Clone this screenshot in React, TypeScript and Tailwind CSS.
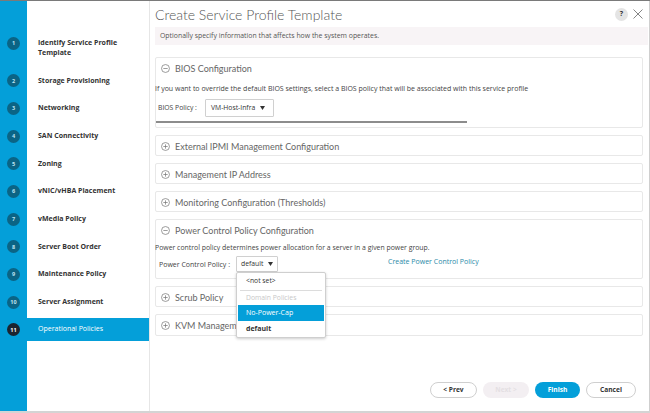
import React from "react";

const steps = [
  "Identify Service Profile Template",
  "Storage Provisioning",
  "Networking",
  "SAN Connectivity",
  "Zoning",
  "vNIC/vHBA Placement",
  "vMedia Policy",
  "Server Boot Order",
  "Maintenance Policy",
  "Server Assignment",
  "Operational Policies",
];

function PlusIcon({ minus = false }: { minus?: boolean }) {
  return (
    <svg width="9" height="9" viewBox="0 0 10 10" className="shrink-0">
      <circle cx="5" cy="5" r="4.4" fill="none" stroke="#777" strokeWidth="0.8" />
      <line x1="2.6" y1="5" x2="7.4" y2="5" stroke="#777" strokeWidth="0.8" />
      {!minus && <line x1="5" y1="2.6" x2="5" y2="7.4" stroke="#777" strokeWidth="0.8" />}
    </svg>
  );
}

function SectionHeader({ title, minus = false }: { title: string; minus?: boolean }) {
  return (
    <div className="h-[21px] flex items-center gap-[5px] pl-[5px]">
      <PlusIcon minus={minus} />
      <span className="text-[9px] text-[#666] font-['Lato',sans-serif]">{title}</span>
    </div>
  );
}

function Caret() {
  return (
    <svg width="5" height="4" viewBox="0 0 5 4" className="ml-[5px]">
      <polygon points="0,0 5,0 2.5,4" fill="#333" />
    </svg>
  );
}

export default function App() {
  return (
    <div
      className="w-[650px] h-[413px] flex bg-white border-t border-t-[#7a7a7a] border-b-2 border-b-[#d4d4d4] overflow-hidden"
      style={{ fontFamily: "'Open Sans', Lato, sans-serif" }}
    >
      {/* Sidebar */}
      <div className="w-[150px] shrink-0 h-full bg-[linear-gradient(to_right,#049fd9_27px,#ffffff_27px)] border-r border-r-[#e6e6e6] pt-[27px]">
        {steps.map((s, i) => {
          const active = i === steps.length - 1;
          const first = i === 0;
          return (
            <div
              key={s}
              className={`flex ${first ? "h-[39px] items-start" : "h-[27.67px] items-center"}`}
            >
              <div className={`w-[27px] flex justify-center ${first ? "pt-[9px]" : ""}`}>
                <div
                  className={`w-[13px] h-[13px] rounded-full flex items-center justify-center text-[5.5px] font-bold ${
                    active ? "bg-[#1c2430] text-white" : "bg-[#0b6485] text-[#bfe3f2]"
                  }`}
                >
                  {i + 1}
                </div>
              </div>
              <div
                className={`flex-1 flex items-center pl-[11px] ${
                  active ? "h-[23px] bg-[#049fd9] text-white font-normal" : "text-[#333] font-bold"
                } ${first ? "pt-[10px] pr-[25px] leading-[10px]" : ""} text-[7px]`}
              >
                {s}
              </div>
            </div>
          );
        })}
      </div>

      {/* Main */}
      <div className="flex-1 h-full flex flex-col pl-[5px] pr-[6px] border-r border-r-[#cfcfcf] relative">
        <div className="h-[26px] flex items-center">
          <span className="text-[14px] text-[#555] font-light font-['Lato',sans-serif]">Create Service Profile Template</span>
          <div className="ml-auto flex items-center gap-[5px]">
            <div className="w-[13px] h-[13px] rounded-full bg-[#e4e4e4] flex items-center justify-center text-[7px] font-bold text-[#333]">
              ?
            </div>
            <svg width="10" height="10" viewBox="0 0 10 10">
              <line x1="0.5" y1="0.5" x2="9.5" y2="9.5" stroke="#777" strokeWidth="0.9" />
              <line x1="9.5" y1="0.5" x2="0.5" y2="9.5" stroke="#777" strokeWidth="0.9" />
            </svg>
          </div>
        </div>
        <div className="h-[18px] bg-[#f8f4f6] flex items-center pl-[5px] text-[6.9px] text-[#555] -mr-[5px]">
          Optionally specify information that affects how the system operates.
        </div>

        <div className="mt-[12px] flex flex-col gap-[7px]">
          {/* BIOS */}
          <div className="h-[71px] border border-[#e8e8e8] rounded-[2px]">
            <SectionHeader title="BIOS Configuration" minus />
            <div className="text-[7px] text-[#444] mt-[6px] -ml-[1px] leading-[8px]">
              If you want to override the default BIOS settings, select a BIOS policy that will be associated with this service profile
            </div>
            <div className="flex items-center mt-[6px] pl-[2px]">
              <span className="text-[6.8px] text-[#444] w-[47px]">BIOS Policy :</span>
              <div className="w-[69px] h-[18px] border border-[#d0d0d0] rounded-[1px] flex items-center pl-[5px] text-[6.8px] text-[#333]">
                VM-Host-Infra
                <Caret />
              </div>
            </div>
            <div className="mt-[4px] h-[2px] w-[311px] bg-[#8c8c8c] ml-[0px]" />
          </div>

          <div className="h-[21px] border border-[#e8e8e8] rounded-[2px]">
            <SectionHeader title="External IPMI Management Configuration" />
          </div>
          <div className="h-[21px] border border-[#e8e8e8] rounded-[2px]">
            <SectionHeader title="Management IP Address" />
          </div>
          <div className="h-[21px] border border-[#e8e8e8] rounded-[2px]">
            <SectionHeader title="Monitoring Configuration (Thresholds)" />
          </div>

          {/* Power */}
          <div className="h-[60px] border border-[#e8e8e8] rounded-[2px] relative">
            <SectionHeader title="Power Control Policy Configuration" minus />
            <div className="text-[6.9px] text-[#444] mt-[3px] -ml-[1px] leading-[8px]">
              Power control policy determines power allocation for a server in a given power group.
            </div>
            <div className="flex items-start mt-[4px] pl-[3px]">
              <span className="text-[7px] text-[#444] w-[77px] mt-[4px]">Power Control Policy :</span>
              <div className="w-[42px] h-[16px] border border-[#d0d0d0] rounded-[1px] flex items-center pl-[4px] text-[6.8px] text-[#333]">
                default
                <Caret />
              </div>
              <span className="ml-[110px] text-[7px] text-[#2a8aa8] mt-[1px]">Create Power Control Policy</span>
            </div>

            {/* Dropdown */}
            <div className="absolute left-[80px] top-[52px] w-[90px] h-[66px] bg-white border border-[#cfcfcf] rounded-[2px] shadow-[0_1px_3px_rgba(0,0,0,0.2)] z-10 flex flex-col">
              <div className="h-[17px] flex items-center pl-[9px] text-[6.8px] text-[#333]">&lt;not set&gt;</div>
              <div className="mx-[3px] h-px bg-[#dcdcdc]" />
              <div className="h-[15px] flex items-center pl-[9px] text-[6.8px] text-[#c8c8c8]">Domain Policies</div>
              <div className="h-[16px] mx-px flex items-center pl-[8px] text-[7px] text-white bg-[#049fd9]">No-Power-Cap</div>
              <div className="h-[16px] flex items-center pl-[9px] text-[7px] font-bold text-[#333]">default</div>
            </div>
          </div>

          <div className="h-[21px] border border-[#e8e8e8] rounded-[2px]">
            <SectionHeader title="Scrub Policy" />
          </div>
          <div className="h-[22px] border border-[#e8e8e8] rounded-[2px]">
            <SectionHeader title="KVM Management Policy" />
          </div>
        </div>

        {/* Buttons */}
        <div className="mt-auto mb-[13px] flex justify-end gap-[6px] pr-[7px]">
          <button className="w-[47px] h-[16px] rounded-full border border-[#cfcfcf] bg-white text-[6.6px] font-bold text-[#333]">
            &lt; Prev
          </button>
          <button className="w-[46px] h-[16px] rounded-full bg-[#f3eff2] text-[6.6px] font-bold text-[#e4dfe3]">
            Next &gt;
          </button>
          <button className="w-[45px] h-[16px] rounded-full bg-[#049fd9] text-[6.6px] font-bold text-white">
            Finish
          </button>
          <button className="w-[50px] h-[16px] rounded-full border border-[#cfcfcf] bg-white text-[6.6px] font-bold text-[#333]">
            Cancel
          </button>
        </div>
      </div>
    </div>
  );
}
